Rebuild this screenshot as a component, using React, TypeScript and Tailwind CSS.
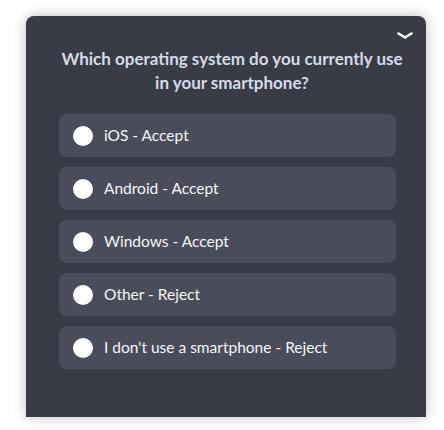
const options = [
  'iOS - Accept',
  'Android - Accept',
  'Windows - Accept',
  'Other - Reject',
  "I don't use a smartphone - Reject",
]

export default function App() {
  return (
    <div className="w-[444px] h-[430px] bg-white overflow-hidden pt-4 pl-[26px] font-['Lato',sans-serif]">
      <div className="w-[400px] h-[401px] bg-[#393c46] rounded-t-lg shadow-[0_0_14px_rgba(0,0,0,0.25)] flex flex-col">
        <div className="flex justify-end pr-[13px] pt-[16px] h-[24px]">
          <svg width="16" height="8" viewBox="0 0 16 8" fill="none">
            <path d="M1.5 1.5 L8 5.5 L14.5 1.5" stroke="white" strokeWidth="2.6" strokeLinecap="round" strokeLinejoin="round" />
          </svg>
        </div>
        <h2 className="text-center text-[17px] leading-[24px] font-bold text-[#d5dbe6] pl-[30px] pr-[18px] mt-[7px]">
          Which operating system do you currently use in your smartphone?
        </h2>
        <div className="flex flex-col gap-[10px] pl-[33px] pr-[30px] mt-[19px]">
          {options.map((label) => (
            <div
              key={label}
              className="h-[43px] rounded-lg bg-[#4a4d59] flex items-center pl-[14px] gap-[11px]"
            >
              <span className="w-[20px] h-[20px] rounded-full bg-white shrink-0" />
              <span className="text-[15.5px] text-[#f4f5f8]">{label}</span>
            </div>
          ))}
        </div>
      </div>
    </div>
  )
}
